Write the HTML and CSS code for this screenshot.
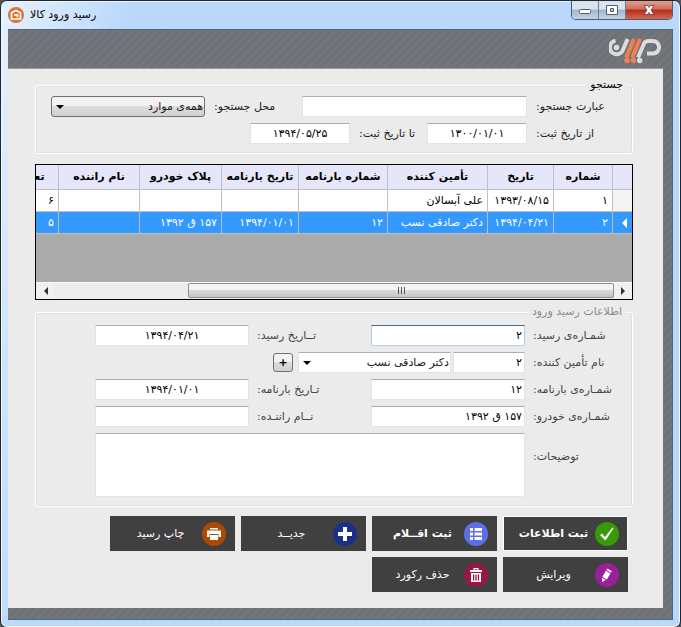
FILE: index.html
```html
<!DOCTYPE html>
<html lang="fa">
<head>
<meta charset="utf-8">
<title>رسید ورود کالا</title>
<link rel="stylesheet" href="styles.css">
</head>
<body>
<div class="window">
  <header class="titlebar">
    <svg class="app-icon" viewBox="0 0 16 16"><circle cx="8" cy="8" r="8" fill="#dc7434"/><path d="M3.500 12V5.800L8 3.500l4.500 2.300V12z" fill="none" stroke="#fff" stroke-width="1.600"/><path d="M6 7h4.500v3.500H8.500V9H6z" fill="#fbe3d2"/></svg>
    <h1 class="title" dir="rtl">رسید ورود کالا</h1>
    <div class="window-controls">
      <button class="control" type="button" aria-label="کوچک کردن"><svg viewBox="0 0 14 14"><rect x="1.500" y="6.500" width="11" height="4" rx="1" fill="#fff" stroke="#555e70"/></svg></button>
      <button class="control" type="button" aria-label="بزرگ کردن"><svg viewBox="0 0 14 14"><path fill-rule="evenodd" d="M1.500 2.500h11v9h-11zM5.500 5.500v3h3v-3z" fill="#fff" stroke="#555e70"/></svg></button>
      <button class="control control-close" type="button" aria-label="بستن"><svg viewBox="0 0 14 14"><path d="M2 2.500h3.500L7 4.500l1.500-2H12L9 7l3 4.500H8.500L7 9.500l-1.500 2H2L5 7z" fill="#fff" stroke="#6b3038" stroke-width=".8"/></svg></button>
    </div>
  </header>
  <div class="client" dir="rtl">
    <div class="banner">
      <svg class="logo" viewBox="0 0 54 26" fill="none">
        <g stroke="#dcdcdc" stroke-width="4">
          <path d="M6.500 2.800A6.800 6.800 0 1 0 14.300 11L18.600 1"/>
          <path d="M29 19.500L35.500 4.500Q36.800 3 40 3H44a6 6.200 0 0 1 0 12.600H38"/>
        </g>
        <circle cx="7.500" cy="9.500" r="2.800" fill="#dcdcdc"/>
        <path d="M17.200 19.500L25 1M23.200 19.500L31 1" stroke="#f08050" stroke-width="4"/>
        <circle cx="18" cy="22.500" r="2.700" fill="#f08050"/><circle cx="24.300" cy="22.500" r="2.700" fill="#f08050"/><circle cx="30.700" cy="22.500" r="2.700" fill="#dcdcdc"/>
      </svg>
    </div>
    <main class="panel">
      <fieldset class="group search">
        <legend>جستجو</legend>
        <div class="search-row">
          <label class="label-main" for="term">عبارت جستجو:</label>
          <input class="field grow" id="term" type="text">
          <label class="label-place" for="place">محل جستجو:</label>
          <span class="select-box place"><select class="select-button" id="place"><option>همه‌ی موارد</option></select></span>
        </div>
        <div class="search-row">
          <label class="label-main" for="from">از تاریخ ثبت:</label>
          <input class="field date" id="from" type="text" value="۱۳۰۰/۰۱/۰۱">
          <label class="label-to" for="to">تا تاریخ ثبت:</label>
          <input class="field date" id="to" type="text" value="۱۳۹۴/۰۵/۲۵">
        </div>
      </fieldset>

      <div class="data-grid">
        <div class="grid-view">
          <table>
            <colgroup><col class="c-mark"><col class="c-number"><col class="c-date"><col class="c-supplier"><col class="c-bill"><col class="c-billdate"><col class="c-plate"><col class="c-driver"><col class="c-count"></colgroup>
            <thead><tr><th></th><th>شماره</th><th>تاریخ</th><th>تأمین کننده</th><th>شماره بارنامه</th><th>تاریخ بارنامه</th><th>پلاک خودرو</th><th>نام راننده</th><th>تعداد</th></tr></thead>
            <tbody>
              <tr><td class="mark"></td><td>۱</td><td>۱۳۹۳/۰۸/۱۵</td><td>علی آبسالان</td><td></td><td></td><td></td><td></td><td>۶</td></tr>
              <tr class="selected"><td class="mark"><svg class="row-arrow" viewBox="0 0 5 10"><path d="M5 0v10L0 5z" fill="#fff"/></svg></td><td>۲</td><td>۱۳۹۴/۰۴/۲۱</td><td>دکتر صادقی نسب</td><td>۱۲</td><td>۱۳۹۴/۰۱/۰۱</td><td>۱۵۷ ق ۱۳۹۲</td><td></td><td>۵</td></tr>
            </tbody>
          </table>
        </div>
        <div class="scrollbar">
          <button class="scroll-arrow" type="button" aria-label="راست"><svg viewBox="0 0 5 8"><path d="M0 0v8l4-4z" fill="#333"/></svg></button>
          <div class="scroll-track"><div class="scroll-thumb"><i></i><i></i><i></i></div></div>
          <button class="scroll-arrow" type="button" aria-label="چپ"><svg viewBox="0 0 5 8"><path d="M5 0v8L1 4z" fill="#333"/></svg></button>
        </div>
      </div>

      <fieldset class="group details">
        <legend>اطلاعات رسید ورود</legend>
        <div class="form-grid">
          <label for="no">شمـاره‌ی رسید:</label>
          <input class="field active" id="no" type="text" value="۲">
          <label for="date">تــاریخ رسید:</label>
          <input class="field centered" id="date" type="text" value="۱۳۹۴/۰۴/۲۱">
          <label for="supplier">نام تأمین کننده:</label>
          <div class="supplier-row">
            <input class="field code" id="supplier" type="text" value="۲">
            <span class="select-box supplier"><select class="select-field" aria-label="نام تأمین کننده"><option>دکتر صادقی نسب</option></select></span>
            <button class="add" type="button">+</button>
          </div>
          <label for="bill">شمـاره‌ی بارنامه:</label>
          <input class="field" id="bill" type="text" value="۱۲">
          <label for="billdate">تـاریخ بارنامه:</label>
          <input class="field centered" id="billdate" type="text" value="۱۳۹۴/۰۱/۰۱">
          <label for="car">شمـاره‌ی خودرو:</label>
          <input class="field" id="car" type="text" value="۱۵۷ ق ۱۳۹۲">
          <label for="driver">نــام راننـده:</label>
          <input class="field" id="driver" type="text">
          <label class="notes-label" for="notes">توضیحات:</label>
          <textarea class="field notes" id="notes"></textarea>
        </div>
      </fieldset>

      <div class="actions">
        <button class="action strong default" type="button"><svg viewBox="0 0 24 24"><circle cx="12" cy="12" r="12" fill="#389a08"/><path d="M5 13l2-1.500 3 3.500 7.500-9.500 1 .8L10.500 18.500z" fill="#fff"/></svg><span>ثبت اطلاعات</span></button>
        <button class="action strong" type="button"><svg viewBox="0 0 24 24"><circle cx="12" cy="12" r="12" fill="#5c6fe8"/><path d="M6 6h3v3H6zM10.500 6H18v3h-7.500zM6 10.500h3v3H6zM10.500 10.500H18v3h-7.500zM6 15h3v3H6zM10.500 15H18v3h-7.500z" fill="#fff"/></svg><span>ثبت اقــلام</span></button>
        <button class="action" type="button"><svg viewBox="0 0 24 24"><circle cx="12" cy="12" r="12" fill="#1a3088"/><path d="M10 5h4v5h5v4h-5v5h-4v-5H5v-4h5z" fill="#fff"/></svg><span>جدیــد</span></button>
        <button class="action" type="button"><svg viewBox="0 0 24 24"><circle cx="12" cy="12" r="12" fill="#ab4905"/><path d="M8 6h8v1.500H8zM5 8.500h14V15h-2.500v-3h-9v3H5z" fill="#fff"/><path d="M8 13h8v5H8z" fill="#fff"/></svg><span>چاپ رسید</span></button>
        <button class="action" type="button"><svg viewBox="0 0 24 24"><circle cx="12" cy="12" r="12" fill="#98209a"/><path d="M12.300 5.500l4.600 2.700-1 1.600-4.500-2.800zM10.900 7.800l4.500 2.800-3.500 5.900-4.500-2.800zM7 14.700l3.800 2.400L7 19z" fill="#fff"/></svg><span>ویرایش</span></button>
        <button class="action" type="button"><svg viewBox="0 0 24 24"><circle cx="12" cy="12" r="12" fill="#981844"/><path d="M6 7h12v2H6zM9.500 5h5v2h-1.200v-.8h-2.600V7H9.500z" fill="#fff"/><path fill-rule="evenodd" d="M7 10h10v9H7zm2 1.500v6h1.300v-6zm2.400 0v6h1.300v-6zm2.400 0v6h1.300v-6z" fill="#fff"/></svg><span>حذف رکورد</span></button>
      </div>
    </main>
  </div>
</div>
</body>
</html>
```
FILE: styles.css
```css
* { box-sizing: border-box; }

body {
  margin: 0;
  background: #555;
  font-family: "DejaVu Sans", sans-serif;
  font-size: 11px;
  line-height: 16px;
  color: #222;
}

button, input, select, textarea { font: inherit; color: inherit; margin: 0; }
svg { display: block; flex: none; }

.window {
  display: flex;
  flex-direction: column;
  min-height: 100vh;
  padding: 0 7px 7px;
  border: 1px solid #20262e;
  border-radius: 7px;
  background: linear-gradient(100deg, #e6f1fd 0, #b9d8fb 130px) #b9d8fb;
  box-shadow: inset 0 0 0 1px #eef6fe;
}

.titlebar {
  display: flex;
  align-items: flex-start;
  height: 28px;
}

.app-icon { width: 16px; height: 16px; margin-top: 6px; }

.title {
  flex: 1;
  margin: 6px 0 0 6px;
  text-align: left;
  font-size: 11px;
  line-height: 16px;
  font-weight: normal;
  color: #000;
}

.window-controls {
  display: flex;
  border: 1px solid #4f5c6e;
  border-top: 0;
  border-radius: 0 0 5px 5px;
  overflow: hidden;
}

.control {
  display: flex;
  align-items: center;
  justify-content: center;
  width: 27px;
  height: 18px;
  padding: 0;
  border: 0;
  border-right: 1px solid #6b7a90;
  background: linear-gradient(#d9e4f1 0 45%, #a0b4cc 50%, #c2d6ea);
}

.control svg { width: 14px; height: 14px; }

.control-close {
  width: 46px;
  border-right: 0;
  background: linear-gradient(#dc9d90 0 5%, #cf6c58 45%, #b62d1c 50%, #d06850);
}

.client {
  flex: 1;
  display: flex;
  flex-direction: column;
  padding: 0 9px 11px 0;
  border: 1px solid #50657f;
  border-left: 0;
  background: repeating-linear-gradient(135deg, #6e7276 0 3px, #72777b 3px 6px);
}

.banner {
  display: flex;
  align-items: flex-start;
  height: 38px;
  padding-top: 8px;
}

.logo { width: 54px; height: 26px; }

.panel {
  flex: 1;
  padding: 16px 30px 16px 27px;
  border-top: 1px solid #999da0;
  background: #ebebeb;
}

.group {
  min-width: 0;
  margin: 0;
  border: 1px solid #fff;
  border-radius: 3px;
  box-shadow: inset 0 0 0 1px #dde0e3;
}

.group legend {
  height: 16px;
  padding: 0 4px;
  background: #ebebeb;
}

.search { margin-top: -8px; padding: 3px 26px 9px 15px; }
.search-row { display: flex; align-items: center; gap: 9px; }
.search-row + .search-row { margin-top: 6px; }
.search legend { color: #000; margin-right: -21px; }

.label-main { width: 70px; text-align: left; white-space: nowrap; }
.label-place { width: 79px; text-align: left; white-space: nowrap; }
.label-to { width: 59px; text-align: left; white-space: nowrap; }

.field {
  width: 100%;
  min-width: 0;
  height: 21px;
  padding: 0 2px;
  border: 1px solid #e0e4e9;
  border-top-color: #abadb3;
  border-radius: 1px;
  background: #fff;
  color: #000;
  text-align: right;
  outline: 0;
}

.field.active { border-color: #3d6f9c #a9cbe6 #b5cfe7; }
.field.grow { flex: 1; }
.field.date { width: 100px; text-align: center; }
.field.centered { text-align: center; }
.field.code { width: 72px; }

.select-box { position: relative; display: flex; }
.select-box select { width: 100%; height: 21px; appearance: none; outline: 0; }

.select-box::after {
  content: "";
  position: absolute;
  left: 5px;
  top: 9px;
  border: 4px solid transparent;
  border-top-color: #000;
  border-bottom: 0;
  pointer-events: none;
}

.place { width: 154px; }
.supplier { width: 153px; }

.select-button {
  padding: 0 1px 0 14px;
  border: 1px solid #707070;
  border-radius: 3px;
  background: linear-gradient(#f2f2f2 0 45%, #dddddd 50%, #cfcfcf);
}

.select-field {
  padding: 0 1px 0 14px;
  border: 1px solid #e0e4e9;
  border-top-color: #abadb3;
  background: #fff;
}

.data-grid { margin-top: 10px; border: 1px solid #000; background: #ababab; }
.grid-view { height: 117px; overflow: hidden; }

table { width: 628px; table-layout: fixed; border-collapse: separate; border-spacing: 0; }
.c-mark { width: 20px; }
.c-number { width: 59px; }
.c-date { width: 66px; }
.c-supplier { width: 100px; }
.c-bill { width: 89px; }
.c-billdate { width: 77px; }
.c-plate { width: 82px; }
.c-driver { width: 81px; }
.c-count { width: 54px; }

th, td {
  overflow: hidden;
  padding: 0 4px;
  border-left: 1px solid #bfbfbf;
  border-bottom: 1px solid #bfbfbf;
  white-space: nowrap;
}

th { height: 25px; padding: 0; background: #e6e6fa; color: #000; }
td { height: 22px; background: #fff; color: #000; text-align: right; }
td.mark { background: #f5f5f5; padding: 0 5px; }
.selected td { background: #3399ff; color: #fff; }
.row-arrow { width: 5px; height: 10px; }

.scrollbar { display: flex; height: 17px; background: #ececec; border-top: 1px solid #fafafa; }

.scroll-arrow {
  display: flex;
  align-items: center;
  justify-content: center;
  width: 18px;
  padding: 0;
  border: 0;
  background: #f0f0f0;
}

.scroll-arrow svg { width: 5px; height: 8px; }
.scroll-track { flex: 1; }

.scroll-thumb {
  display: flex;
  align-items: center;
  justify-content: center;
  gap: 2px;
  width: 76%;
  height: 15px;
  border: 1px solid #8f8f8f;
  border-radius: 2px;
  background: linear-gradient(#f4f4f4 0 45%, #dadada 50%, #c6c6c6);
}

.scroll-thumb i { width: 1px; height: 7px; background: #555; }

.details { margin-top: 4px; padding: 5px 11px 9px 59px; }
.details legend { margin-right: -5px; color: #8a8a8a; }

.form-grid {
  display: grid;
  grid-template-columns: 88px 1fr 106px 1fr;
  gap: 6px 8px;
  align-items: center;
}

.form-grid label { text-align: left; white-space: nowrap; color: #444; }
.supplier-row { grid-column: 2 / 5; display: flex; align-items: center; gap: 2px; }

.add {
  width: 20px;
  height: 19px;
  margin-right: 3px;
  padding: 0;
  border: 1px solid #707070;
  border-radius: 3px;
  background: linear-gradient(#f2f2f2 0 45%, #dddddd 50%, #cfcfcf);
  color: #000;
  font-weight: bold;
  line-height: 16px;
}

.notes { grid-column: 2 / 5; height: 64px; resize: none; display: block; }
.notes-label { align-self: start; padding-top: 16px; }

.actions {
  display: grid;
  grid-template-columns: repeat(4, 1fr);
  gap: 6px;
  margin: 9px 5px 0 75px;
}

.action {
  display: flex;
  align-items: center;
  height: 35px;
  padding: 0 9px;
  border: 0;
  background: #404040;
  color: #fff;
}

.action svg { width: 24px; height: 24px; }
.action span { flex: 1; text-align: center; white-space: nowrap; }
.action.strong { font-weight: bold; }
.action.default { box-shadow: inset 0 0 0 1px #fff; }
```
